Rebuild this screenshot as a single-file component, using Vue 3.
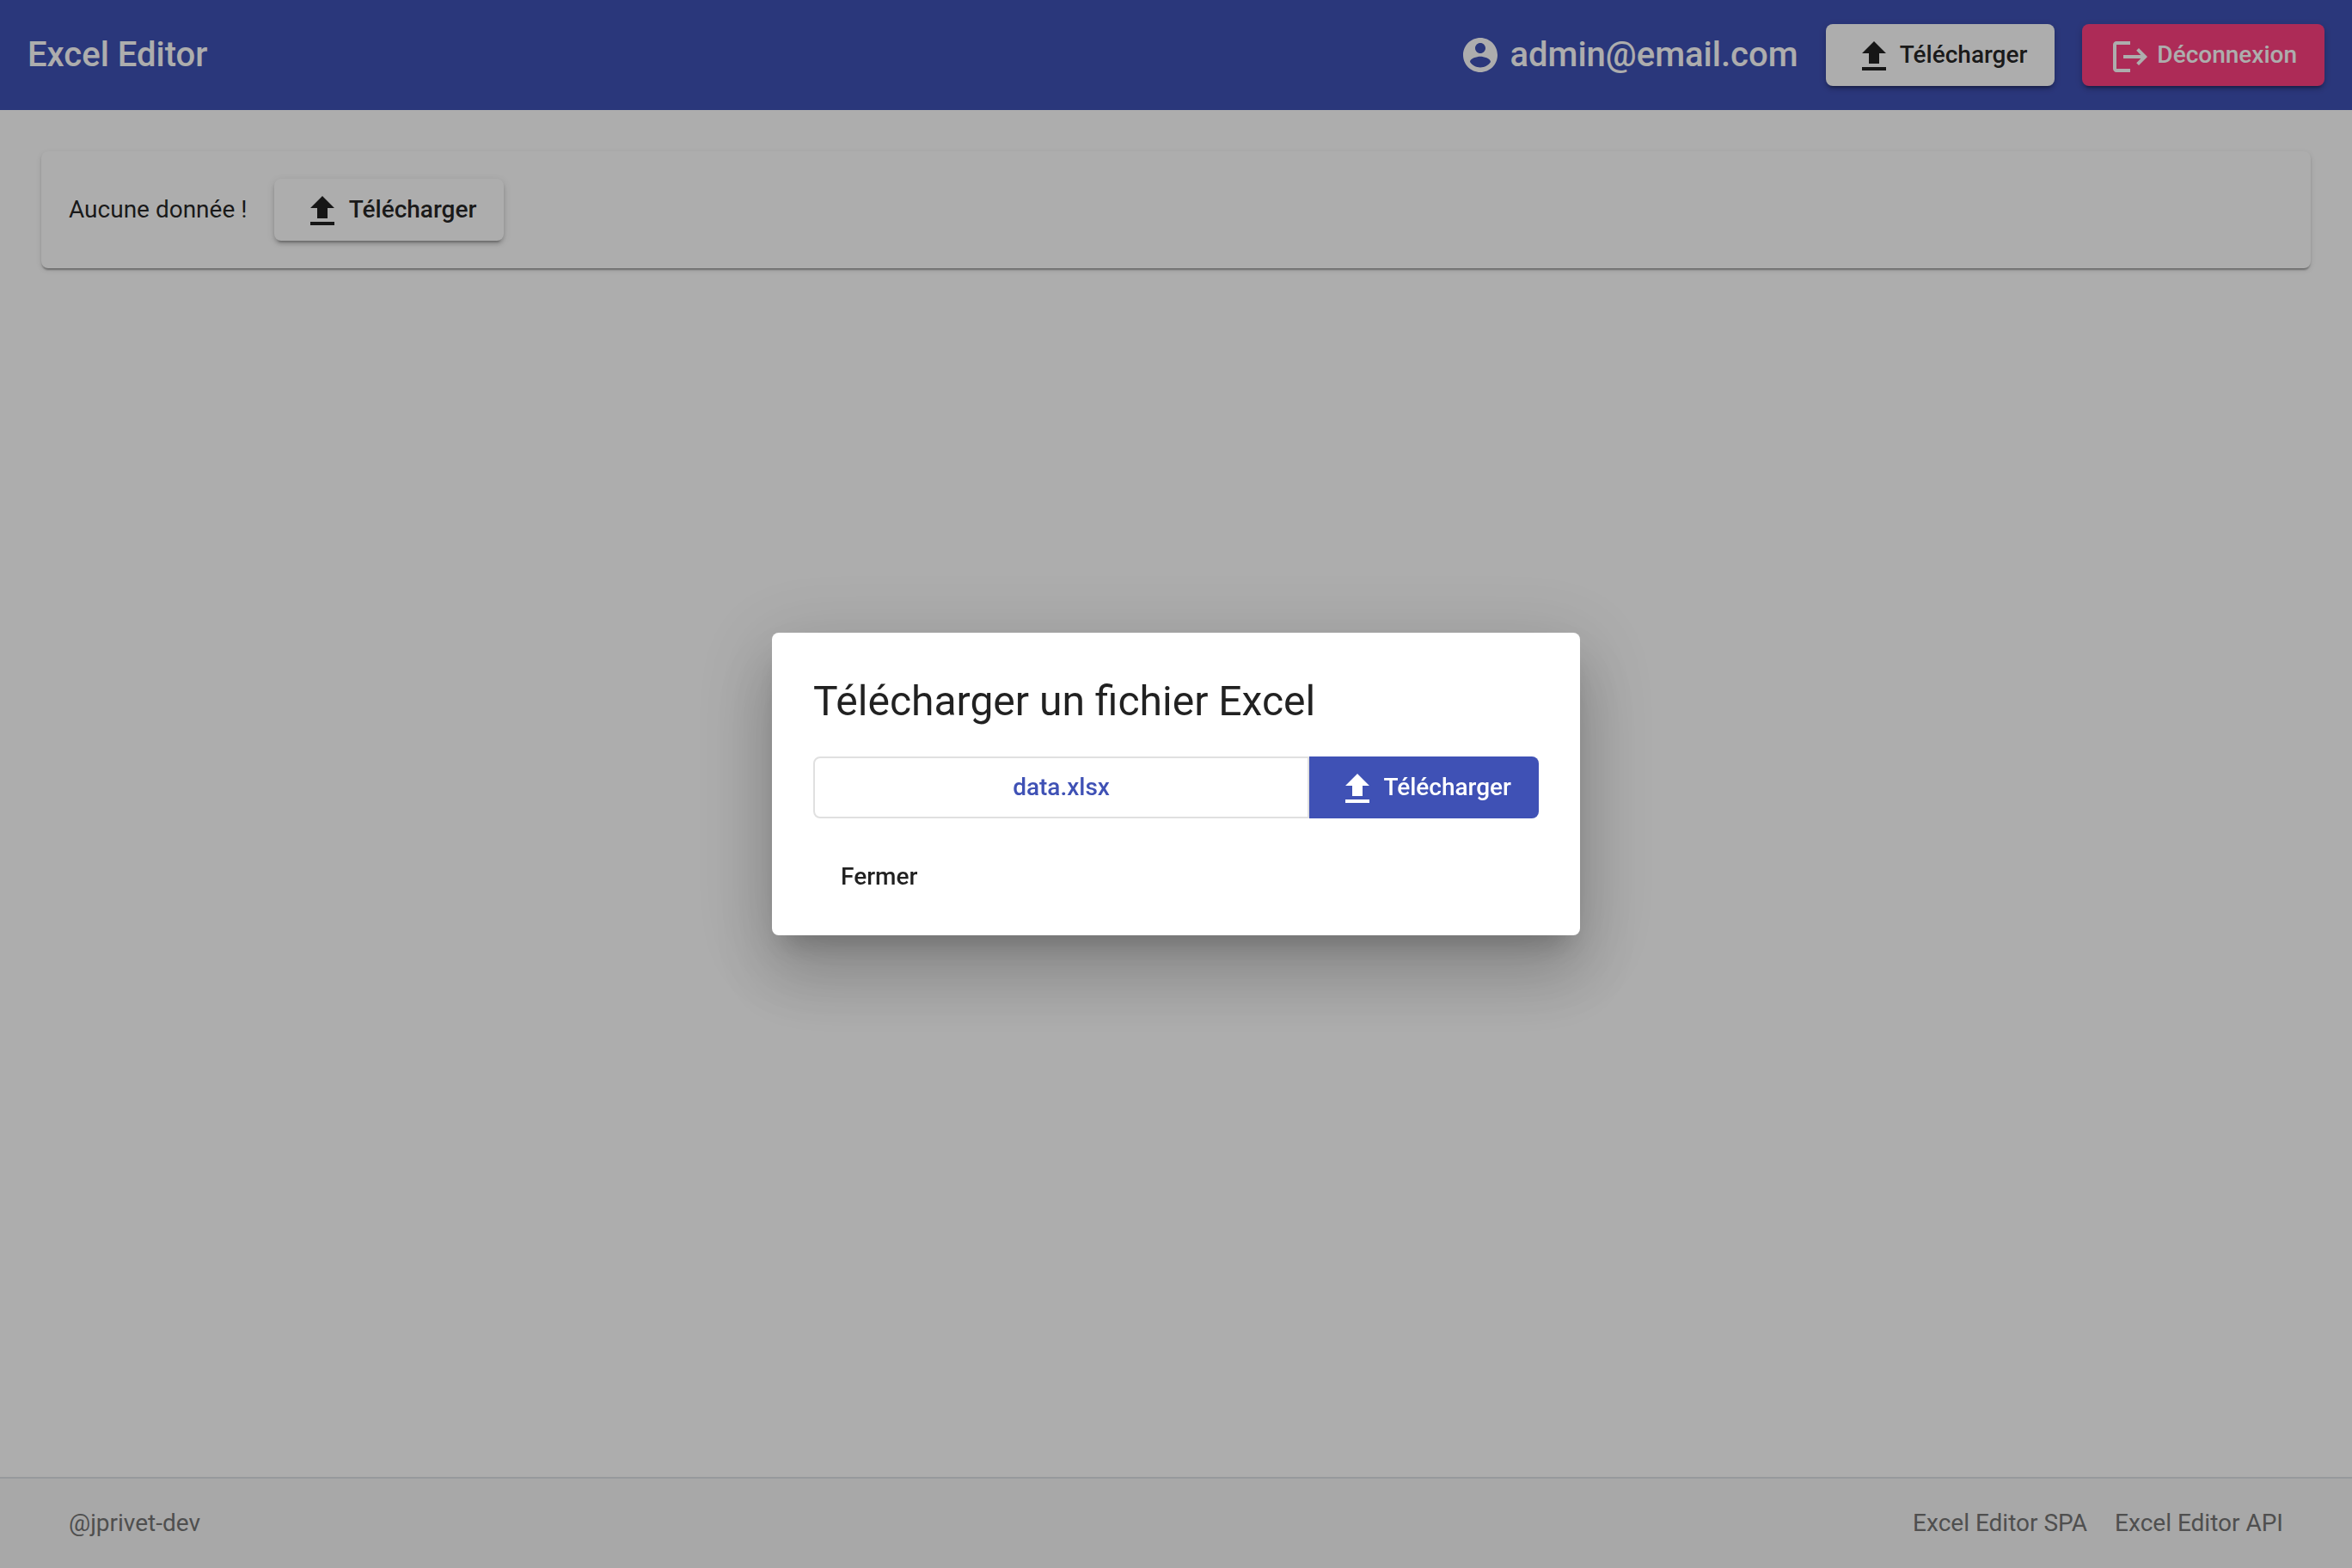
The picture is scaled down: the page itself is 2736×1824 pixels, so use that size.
<script setup>
import { h } from 'vue'

const email = 'admin@email.com'
const fileName = 'data.xlsx'
const links = ['Excel Editor SPA', 'Excel Editor API']

const paths = {
  account:
    'M12 2C6.48 2 2 6.48 2 12s4.48 10 10 10 10-4.48 10-10S17.52 2 12 2zm0 3c1.66 0 3 1.34 3 3s-1.34 3-3 3-3-1.34-3-3 1.34-3 3-3zm0 14.2c-2.5 0-4.71-1.28-6-3.22.03-1.99 4-3.08 6-3.08 1.99 0 5.97 1.09 6 3.08-1.29 1.94-3.5 3.22-6 3.22z',
  upload: 'M5 20h14v-2H5v2zM5 10h4v6h6v-6h4l-7-7-7 7z',
  logout:
    'M17 7l-1.41 1.41L18.17 11H8v2h10.17l-2.58 2.58L17 17l5-5-5-5zM4 5h8V3H4c-1.1 0-2 .9-2 2v14c0 1.1.9 2 2 2h8v-2H4V5z',
}

const Icon = (props) =>
  h('svg', { viewBox: '0 0 24 24', 'aria-hidden': 'true' }, [h('path', { d: paths[props.name] })])
Icon.props = ['name']
</script>

<template>
  <div class="page">
    <header class="toolbar">
      <h1 class="brand">Excel Editor</h1>
      <div class="toolbar-actions">
        <span class="account"><Icon class="icon" name="account" /> {{ email }}</span>
        <button type="button" class="btn raised"><Icon class="icon" name="upload" /> Télécharger</button>
        <button type="button" class="btn raised accent"><Icon class="icon" name="logout" /> Déconnexion</button>
      </div>
    </header>

    <main class="content">
      <section class="card">
        <span>Aucune donnée !</span>
        <button type="button" class="btn raised"><Icon class="icon" name="upload" /> Télécharger</button>
      </section>
    </main>

    <footer class="footer">
      <a href="#">@jprivet-dev</a>
      <nav class="footer-links">
        <a v-for="link in links" :key="link" href="#">{{ link }}</a>
      </nav>
    </footer>

    <div class="backdrop">
      <div class="dialog" role="dialog" aria-modal="true" aria-labelledby="dialog-title">
        <h2 id="dialog-title" class="dialog-title">Télécharger un fichier Excel</h2>
        <div class="file-group">
          <button type="button" class="btn file-name">{{ fileName }}</button>
          <button type="button" class="btn primary"><Icon class="icon" name="upload" /> Télécharger</button>
        </div>
        <div class="dialog-actions">
          <button type="button" class="btn">Fermer</button>
        </div>
      </div>
    </div>
  </div>
</template>

<style>
body {
  margin: 0;
  background: #fff;
}
</style>

<style scoped>
.page {
  display: flex;
  flex-direction: column;
  min-height: 100vh;
  font-family: Roboto, sans-serif;
  font-size: 28px;
  line-height: 40px;
  color: rgba(0, 0, 0, 0.87);
}

.icon {
  display: inline-block;
  width: 48px;
  height: 48px;
  vertical-align: middle;
  fill: currentColor;
}

.btn {
  box-sizing: border-box;
  height: 72px;
  padding: 0 32px;
  border: 0;
  border-radius: 8px;
  background: transparent;
  color: rgba(0, 0, 0, 0.87);
  font: 500 28px/72px Roboto, sans-serif;
  white-space: nowrap;
  cursor: pointer;
}

.raised {
  background: #fff;
  box-shadow:
    0 6px 2px -4px rgba(0, 0, 0, 0.2),
    0 4px 4px 0 rgba(0, 0, 0, 0.14),
    0 2px 10px 0 rgba(0, 0, 0, 0.12);
}

.accent {
  background: #ff4081;
  color: #fff;
}

.primary {
  border-radius: 0 8px 8px 0;
  background: #3f51b5;
  color: #fff;
}

.toolbar {
  display: flex;
  align-items: center;
  justify-content: space-between;
  height: 128px;
  padding: 0 32px;
  background: #3f51b5;
  color: #fff;
  font-size: 40px;
  font-weight: 500;
}

.brand {
  margin: 0;
  font: inherit;
}

.toolbar-actions {
  display: flex;
  align-items: center;
  gap: 32px;
}

.account {
  display: flex;
  align-items: center;
  gap: 10px;
}

.content {
  flex: 1;
  padding: 48px;
}

.card {
  display: flex;
  align-items: center;
  gap: 32px;
  padding: 32px;
  border-radius: 8px;
  background: #fff;
  box-shadow:
    0 4px 2px -2px rgba(0, 0, 0, 0.2),
    0 2px 2px 0 rgba(0, 0, 0, 0.14),
    0 2px 6px 0 rgba(0, 0, 0, 0.12);
}

.footer {
  display: flex;
  justify-content: space-between;
  padding: 32px 80px;
  border-top: 2px solid #dee2e6;
  background: #f8f8f8;
}

.footer a {
  color: #757575;
  text-decoration: none;
}

.footer-links {
  display: flex;
  gap: 32px;
}

.backdrop {
  position: fixed;
  inset: 0;
  display: flex;
  align-items: center;
  justify-content: center;
  background: rgba(0, 0, 0, 0.32);
}

.dialog {
  box-sizing: border-box;
  width: 940px;
  max-width: 80vw;
  padding: 48px 48px 32px;
  border-radius: 8px;
  background: #fff;
  box-shadow:
    0 22px 30px -14px rgba(0, 0, 0, 0.2),
    0 48px 76px 6px rgba(0, 0, 0, 0.14),
    0 18px 92px 16px rgba(0, 0, 0, 0.12);
}

.dialog-title {
  margin: 0 0 32px;
  font-size: 48px;
  font-weight: 400;
  line-height: 64px;
}

.file-group {
  display: flex;
}

.file-name {
  flex: 1;
  border: 2px solid #e0e0e0;
  border-radius: 8px 0 0 8px;
  color: #3f51b5;
  line-height: 68px;
}

.dialog-actions {
  margin-top: 32px;
}
</style>
